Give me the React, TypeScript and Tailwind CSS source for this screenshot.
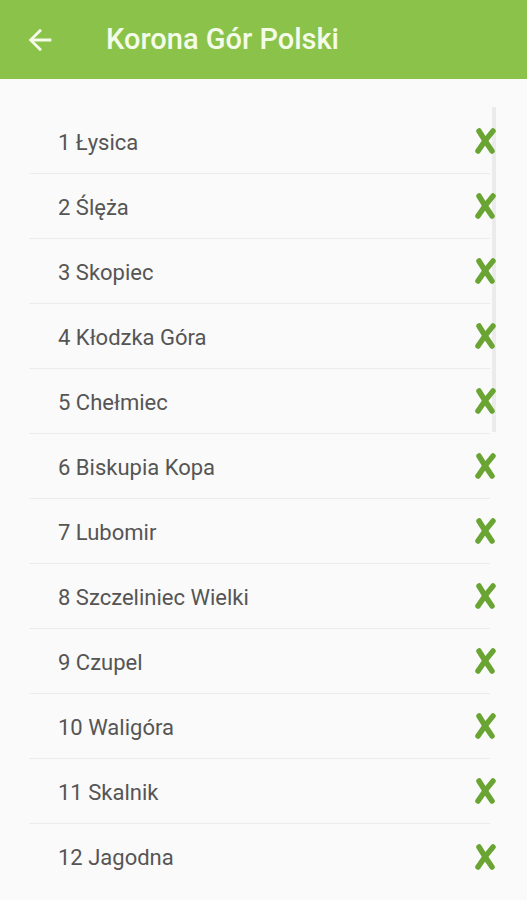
import React from 'react';

const peaks = [
  'Łysica',
  'Ślęża',
  'Skopiec',
  'Kłodzka Góra',
  'Chełmiec',
  'Biskupia Kopa',
  'Lubomir',
  'Szczeliniec Wielki',
  'Czupel',
  'Waligóra',
  'Skalnik',
  'Jagodna',
];

const CrossMark: React.FC = () => (
  <svg width="23" height="28" viewBox="0 0 23 28" fill="none" className="relative shrink-0 -mr-[7px]">
    <path d="M5 4 Q11 14 18 24" stroke="#6aa534" strokeWidth="5.5" strokeLinecap="round" />
    <path d="M19 4 Q11 13 4 24" stroke="#6aa534" strokeWidth="5.5" strokeLinecap="round" />
  </svg>
);

export default function App() {
  return (
    <div className="w-[527px] h-[900px] overflow-hidden bg-[#fafafa]" style={{ fontFamily: 'Roboto, "Noto Sans", sans-serif' }}>
      {/* Toolbar */}
      <header className="h-[79px] bg-[#8bc34a] flex items-center">
        <button className="w-[80px] h-full flex items-center justify-center">
          <svg width="34" height="34" viewBox="0 0 24 24" fill="#f4fbe9">
            <path d="M20 11H7.83l5.59-5.59L12 4l-8 8 8 8 1.41-1.41L7.83 13H20v-2z" />
          </svg>
        </button>
        <h1 className="ml-[26px] text-[29px] font-medium text-[#f4fbe9]">Korona Gór Polski</h1>
      </header>

      {/* List */}
      <div className="relative pt-[30px] pl-[29px] pr-[37px]">
        <div className="absolute right-[31px] top-[28px] w-[4px] h-[325px] bg-[#ebebeb]" />
        <ul>
          {peaks.map((name, i) => (
            <li key={name} className="h-[65px] flex items-center justify-between border-b border-[#ececec] last:border-b-0 pl-[29px]">
              <span className="text-[22px] text-[#555555] pt-[2px]">{i + 1} {name}</span>
              <CrossMark />
            </li>
          ))}
        </ul>
      </div>
    </div>
  );
}
